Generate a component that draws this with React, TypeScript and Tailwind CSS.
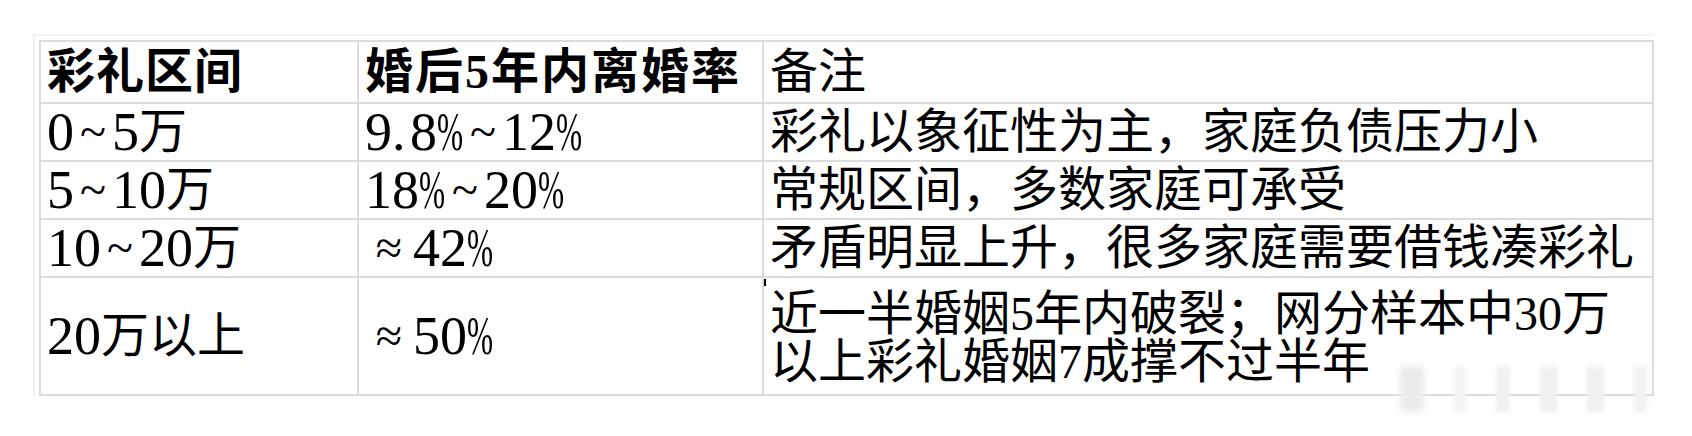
import React from "react";

const font = "font-['Liberation_Serif','Noto_Sans_CJK_SC',serif]";

// Latin runs in the reference are tall half-width glyphs (SimSun-like); approximate them
function Num({ text }: { text: string }) {
  return (
    <>
      {text.split("").map((ch, i) => {
        if (ch === "~") return <span key={i} className="inline-block w-[38px] text-center">~</span>;
        if (ch === ".") return <span key={i} className="inline-block w-[18px] text-[54px]">.</span>;
        if (ch === "%")
          return (
            <span key={i} className="inline-block w-[27px] text-[54px]">
              <span className="inline-block origin-left scale-x-[0.58]">%</span>
            </span>
          );
        if (ch === "≈") return <span key={i} className="inline-block w-[48px] text-center">≈</span>;
        if (/[0-9]/.test(ch))
          return (
            <span key={i} className="text-[54px]">
              {ch}
            </span>
          );
        return <React.Fragment key={i}>{ch}</React.Fragment>;
      })}
    </>
  );
}

type Row = { range: string; rate: string; note: React.ReactNode; tall?: boolean };

const rows: Row[] = [
  { range: "0~5万", rate: "9.8%~12%", note: "彩礼以象征性为主，家庭负债压力小" },
  { range: "5~10万", rate: "18%~20%", note: "常规区间，多数家庭可承受" },
  { range: "10~20万", rate: "≈42%", note: "矛盾明显上升，很多家庭需要借钱凑彩礼" },
  {
    range: "20万以上",
    rate: "≈50%",
    note: (
      <>
        近一半婚姻5年内破裂；网分样本中30万
        <br />
        以上彩礼婚姻7成撑不过半年
      </>
    ),
    tall: true,
  },
];

function Cell({ children, bold, className = "" }: { children: React.ReactNode; bold?: boolean; className?: string }) {
  return (
    <div
      className={`relative flex items-center border-r-2 border-b-2 border-[#dcdcdc] px-[6px] text-[48px] leading-[1.08] text-black ${
        bold ? "font-semibold tracking-[1px]" : "font-normal"
      } ${className}`}
    >
      {children}
    </div>
  );
}

export default function App() {
  return (
    <div className={`relative h-[436px] w-[1692px] overflow-hidden bg-white ${font}`}>
      <div className="ml-[33px] mt-[34px] w-[1622px] border-l-2 border-t-2 border-[#f2f2f2] pl-[4px] pt-[4px]">
        <div className="grid w-[1615px] grid-cols-[318px_405px_890px] border-l-2 border-t-2 border-[#dcdcdc]">
          <Cell bold className="h-[62px]">彩礼区间</Cell>
          <Cell bold className="h-[62px] tracking-[2px]">婚后5年内离婚率</Cell>
          <Cell className="h-[62px]">备注</Cell>

          {rows.map((r, i) => (
            <React.Fragment key={i}>
              <Cell className={r.tall ? "h-[118px]" : "h-[58px]"}>
                <Num text={r.range} />
              </Cell>
              <Cell className={r.tall ? "h-[118px]" : "h-[58px]"}>
                <Num text={r.rate} />
              </Cell>
              <Cell className={r.tall ? "h-[118px] items-start pt-[12px] leading-[48px]" : "h-[58px]"}>
                {r.tall && <span className="absolute left-0 top-[1px] h-[7px] w-[2px] bg-black" />}
                <span>{r.note}</span>
              </Cell>
            </React.Fragment>
          ))}
        </div>
      </div>

      {/* faint watermark in the corner */}
      <div className="pointer-events-none absolute left-[1400px] top-[366px] flex h-[46px] items-stretch gap-[30px]">
        <div className="w-[24px] bg-[#ebebeb] blur-[3px]" />
        <div className="w-[12px] bg-[#f2f2f2] blur-[2px]" />
        <div className="w-[14px] bg-[#f0f0f0] blur-[2px]" />
        <div className="w-[17px] bg-[#f0f0f0] blur-[2px]" />
        <div className="w-[17px] bg-[#f0f0f0] blur-[2px]" />
        <div className="w-[13px] bg-[#f2f2f2] blur-[2px]" />
      </div>
    </div>
  );
}
